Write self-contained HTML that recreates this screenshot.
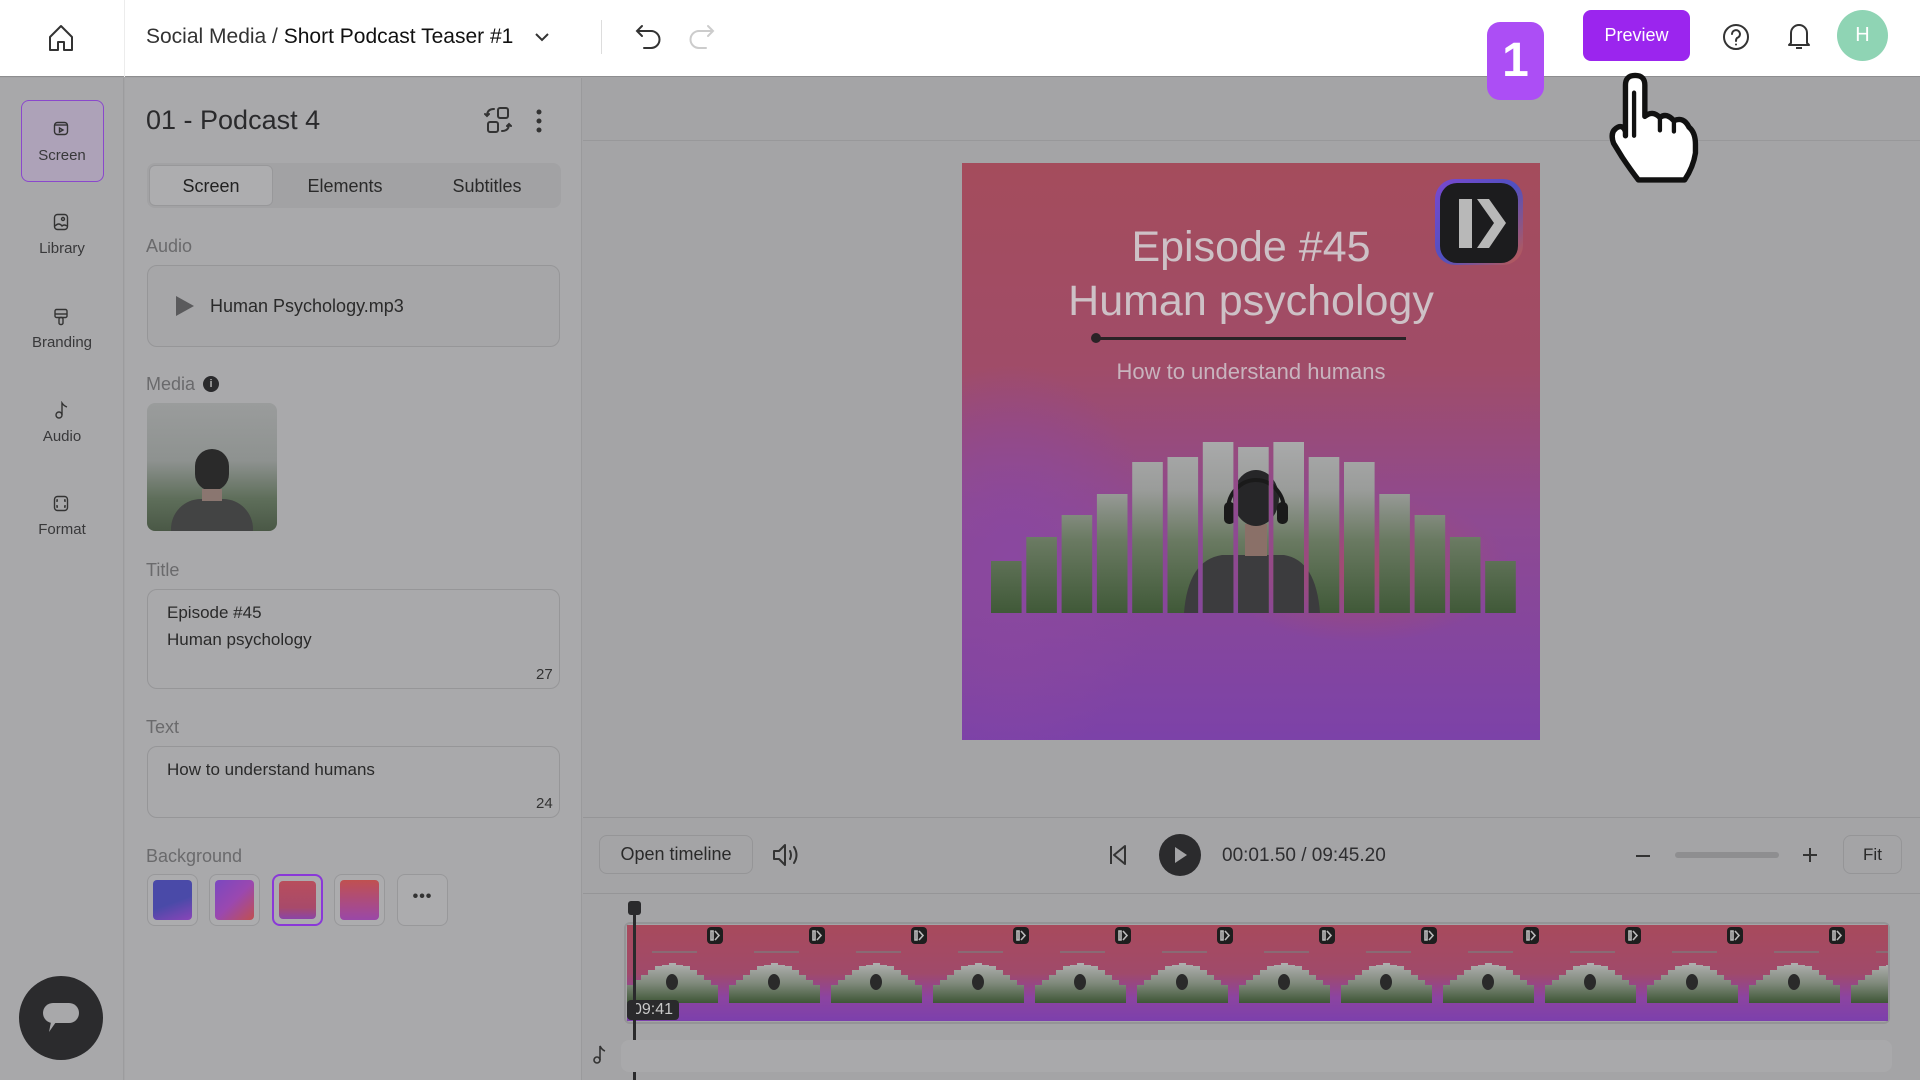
<!DOCTYPE html>
<html><head><meta charset="utf-8"><style>
*{box-sizing:border-box;margin:0;padding:0}
body{width:1920px;height:1080px;overflow:hidden;position:relative;background:#a4a4a6;font-family:"Liberation Sans",sans-serif;color:#2a2a2c}
.a{position:absolute}
.lbl{position:absolute;left:0;width:124px;text-align:center;font-size:15px;color:#38383a}
.sec{position:absolute;left:146px;font-size:18px;color:#6a6a6c}
.box{position:absolute;left:147px;width:413px;border:1.5px solid #969698;border-radius:10px;background:#a9a9ab}
.sw{position:absolute;top:874px;width:51px;height:52px;border:1.5px solid #98989a;border-radius:8px;background:#acacae;padding:5px}
.sw div{width:100%;height:100%;border-radius:4px}
</style></head><body>
<!-- header -->
<div class="a" style="left:0;top:0;width:1920px;height:77px;background:#fff;border-bottom:1px solid #8e8e90"></div>
<div class="a" style="left:124px;top:0;width:1px;height:77px;background:#ececec"></div>
<svg class="a" style="left:48px;top:24px" width="26" height="28" viewBox="0 0 26 28" fill="none" stroke="#333" stroke-width="2" stroke-linejoin="round"><path d="M2 13 L13 2 L24 13 V26 H16 V18 H10 V26 H2 Z"/></svg>
<div class="a" style="left:146px;top:25px;font-size:21px;color:#333;white-space:nowrap">Social Media / <span style="color:#111">Short Podcast Teaser #1</span></div>
<svg class="a" style="left:534px;top:31px" width="16" height="12" viewBox="0 0 16 12" fill="none" stroke="#333" stroke-width="2"><path d="M2 3 L8 9 L14 3"/></svg>
<div class="a" style="left:601px;top:20px;width:1px;height:34px;background:#ddd"></div>
<svg class="a" style="left:634px;top:23px" width="30" height="28" viewBox="0 0 30 28" fill="none" stroke="#333" stroke-width="2" stroke-linecap="round"><path d="M8 3 L3 8 L8 13 M3 8 H17 A8 8 0 0 1 17 25 H10"/></svg>
<svg class="a" style="left:686px;top:23px" width="30" height="28" viewBox="0 0 30 28" fill="none" stroke="#ccc" stroke-width="2" stroke-linecap="round"><path d="M22 3 L27 8 L22 13 M27 8 H13 A8 8 0 0 0 13 25 H20"/></svg>
<div class="a" style="left:1487px;top:22px;width:57px;height:78px;border-radius:13px;background:#ac4ef5;color:#fff;font-weight:bold;font-size:48px;text-align:center;line-height:78px">1</div>
<div class="a" style="left:1583px;top:10px;width:107px;height:51px;border-radius:8px;background:#9b25ee;color:#fff;font-size:18px;text-align:center;line-height:51px">Preview</div>
<svg class="a" style="left:1722px;top:23px" width="28" height="28" viewBox="0 0 28 28" fill="none" stroke="#333" stroke-width="2"><circle cx="14" cy="14" r="12"/><path d="M10 11 A4 4 0 1 1 15 15 Q14 16 14 18" stroke-linecap="round"/><circle cx="14" cy="21.5" r="1" fill="#333" stroke="none"/></svg>
<svg class="a" style="left:1786px;top:21px" width="26" height="30" viewBox="0 0 26 30" fill="none" stroke="#333" stroke-width="2" stroke-linejoin="round"><path d="M5 22 V12 A8 8 0 0 1 21 12 V22 L23 24 H3 Z M10 27 H16"/></svg>
<div class="a" style="left:1837px;top:10px;width:51px;height:51px;border-radius:50%;background:#8fd4b4;color:#fff;font-size:20px;text-align:center;line-height:51px">H</div>

<!-- left rail -->
<div class="a" style="left:0;top:78px;width:124px;height:1002px;background:#a8a8aa;border-right:1px solid #9c9c9e"></div>
<div class="a" style="left:21px;top:100px;width:83px;height:82px;border-radius:8px;background:#ada2b8;border:1.5px solid #8a48cc"></div>
<svg class="a" style="left:53px;top:120px" width="16" height="16" viewBox="0 0 16 16" fill="none" stroke="#333" stroke-width="1.4"><rect x="1.5" y="2.5" width="13" height="12" rx="3"/><path d="M2 5 H14"/><path d="M6.5 8 L10 10 L6.5 12 Z"/></svg>
<div class="lbl" style="top:147px">Screen</div>
<svg class="a" style="left:53px;top:213px" width="16" height="18" viewBox="0 0 16 18" fill="none" stroke="#333" stroke-width="1.4"><rect x="1.5" y="1.5" width="13" height="15" rx="3"/><circle cx="10" cy="6" r="1.5"/><path d="M2 13 Q6 9 9 13 Q11 11 14 13"/></svg>
<div class="lbl" style="top:240px">Library</div>
<svg class="a" style="left:53px;top:308px" width="16" height="18" viewBox="0 0 16 18" fill="none" stroke="#333" stroke-width="1.4"><rect x="2" y="1.5" width="12" height="8" rx="1.5"/><path d="M2 6 H14"/><rect x="6" y="9.5" width="4" height="7" rx="1.5"/></svg>
<div class="lbl" style="top:334px">Branding</div>
<svg class="a" style="left:53px;top:401px" width="16" height="18" viewBox="0 0 16 18" fill="none" stroke="#333" stroke-width="1.4"><circle cx="6" cy="14" r="3"/><path d="M9 14 V2 Q11 5 14 6"/></svg>
<div class="lbl" style="top:428px">Audio</div>
<svg class="a" style="left:53px;top:495px" width="16" height="17" viewBox="0 0 16 17" fill="none" stroke="#333" stroke-width="1.4"><rect x="1.5" y="1.5" width="13" height="14" rx="3"/><path d="M5 5 H4 V7 M11 5 H12 V7 M5 12 H4 V10 M11 12 H12 V10"/></svg>
<div class="lbl" style="top:521px">Format</div>
<div class="a" style="left:19px;top:976px;width:84px;height:84px;border-radius:50%;background:#2b2b2d"></div>
<svg class="a" style="left:41px;top:1000px" width="40" height="36" viewBox="0 0 40 36"><rect x="2" y="3" width="36" height="20" rx="10" fill="#a8a8aa"/><path d="M10 22 L8 32 L15 22 Z" fill="#a8a8aa"/></svg>

<!-- panel -->
<div class="a" style="left:125px;top:78px;width:457px;height:1002px;background:#a9a9ab;border-right:1px solid #9a9a9c"></div>
<div class="a" style="left:146px;top:105px;font-size:27px;font-weight:500;color:#2a2a2c">01 - Podcast 4</div>
<svg class="a" style="left:484px;top:106px" width="28" height="28" viewBox="0 0 28 28" fill="none" stroke="#333" stroke-width="2" stroke-linecap="round"><rect x="14" y="2" width="10" height="10" rx="2"/><rect x="4" y="16" width="10" height="10" rx="2"/><path d="M10 3 Q3 3 3 10 M1 8 L3 10 L5 8 M18 25 Q25 25 25 18 M23 20 L25 18 L27 20"/></svg>
<svg class="a" style="left:534px;top:108px" width="10" height="26" viewBox="0 0 10 26" fill="#333"><circle cx="5" cy="4" r="2.5"/><circle cx="5" cy="13" r="2.5"/><circle cx="5" cy="22" r="2.5"/></svg>
<div class="a" style="left:147px;top:163px;width:414px;height:45px;border-radius:8px;background:#a2a2a4"></div>
<div class="a" style="left:149px;top:165px;width:124px;height:41px;border-radius:6px;background:#adadaf;border:1px solid #98989a"></div>
<div class="a" style="left:149px;top:176px;width:124px;text-align:center;font-size:18px;color:#222">Screen</div>
<div class="a" style="left:283px;top:176px;width:124px;text-align:center;font-size:18px;color:#2a2a2a">Elements</div>
<div class="a" style="left:425px;top:176px;width:124px;text-align:center;font-size:18px;color:#2a2a2a">Subtitles</div>
<div class="sec" style="top:236px">Audio</div>
<div class="box" style="top:265px;height:82px;background:#a6a6a8"></div>
<svg class="a" style="left:174px;top:295px" width="22" height="22" viewBox="0 0 22 22"><path d="M2 1 L20 11 L2 21 Z" fill="#5a5a5c"/></svg>
<div class="a" style="left:210px;top:296px;font-size:18px;color:#2a2a2a">Human Psychology.mp3</div>
<div class="sec" style="top:374px">Media</div>
<div class="a" style="left:203px;top:376px;width:16px;height:16px;border-radius:50%;background:#2a2a2c;color:#aaa;font-size:11px;font-weight:bold;text-align:center;line-height:16px">i</div>
<div class="a" style="left:147px;top:403px;width:130px;height:128px;border-radius:8px;overflow:hidden;background:linear-gradient(#9a9c9c 0%,#8e9290 45%,#5e6e5a 75%,#4a5846 100%)">
<div class="a" style="left:48px;top:46px;width:34px;height:42px;border-radius:17px;background:#2a2a2a"></div>
<div class="a" style="left:24px;top:96px;width:82px;height:50px;border-radius:30px 30px 0 0;background:#434444"></div>
<div class="a" style="left:55px;top:86px;width:20px;height:12px;background:#8a7670"></div>
</div>
<div class="sec" style="top:560px">Title</div>
<div class="box" style="top:589px;height:100px"></div>
<div class="a" style="left:167px;top:599px;font-size:17px;line-height:27px;color:#2a2a2a">Episode #45<br>Human psychology</div>
<div class="a" style="left:536px;top:666px;font-size:15px;color:#333">27</div>
<div class="sec" style="top:717px">Text</div>
<div class="box" style="top:746px;height:72px"></div>
<div class="a" style="left:167px;top:760px;font-size:17px;color:#2a2a2a">How to understand humans</div>
<div class="a" style="left:536px;top:795px;font-size:15px;color:#333">24</div>
<div class="sec" style="top:846px">Background</div>
<div class="sw" style="left:147px"><div style="background:linear-gradient(160deg,#4a4aa8 55%,#8a45b8)"></div></div>
<div class="sw" style="left:209px"><div style="background:linear-gradient(135deg,#7a48c0,#9a48b0 50%,#c05050)"></div></div>
<div class="sw" style="left:272px;border:2.5px solid #8a38d8"><div style="background:linear-gradient(#b84e5c,#a84a6a 70%,#8a45a8)"></div></div>
<div class="sw" style="left:334px"><div style="background:linear-gradient(#c05050,#9a48a8)"></div></div>
<div class="sw" style="left:397px"></div>
<div class="a" style="left:397px;top:888px;width:51px;text-align:center;font-size:16px;font-weight:bold;color:#333;letter-spacing:1px">•••</div>

<!-- main -->
<div class="a" style="left:583px;top:140px;width:1337px;height:1px;background:#98989a"></div>
<div class="a" style="left:962px;top:163px;width:578px;height:577px;overflow:hidden;background:linear-gradient(180deg,#a44c5c 0%,#a04c68 35%,#8e4a92 62%,#7c42a8 100%)">
<div class="a" style="left:-100px;top:200px;width:300px;height:400px;background:radial-gradient(#8a48a0,rgba(138,72,160,0) 70%)"></div>
<div class="a" style="left:250px;top:330px;width:300px;height:150px;background:radial-gradient(rgba(170,76,100,.8),rgba(170,76,100,0) 70%)"></div>
</div>
<div class="a" style="left:962px;top:220px;width:578px;text-align:center;font-size:43px;line-height:54px;color:#cdc1c6">Episode #45<br>Human psychology</div>
<div class="a" style="left:1096px;top:337px;width:310px;height:3px;background:#2a2226"></div>
<div class="a" style="left:1091px;top:333px;width:10px;height:10px;border-radius:50%;background:#2a2226"></div>
<div class="a" style="left:962px;top:359px;width:578px;text-align:center;font-size:22px;color:#c8b4be">How to understand humans</div>
<div class="a" style="left:1435px;top:179px;width:88px;height:86px;border-radius:20px;background:linear-gradient(135deg,#7a48d0,#5050c0 50%,#c05a50)"></div>
<div class="a" style="left:1440px;top:183px;width:78px;height:80px;border-radius:17px;background:#1c1c1e"></div>
<svg class="a" style="left:1455px;top:197px" width="55" height="54" viewBox="0 0 55 54"><rect x="4" y="2" width="13" height="49" fill="#b8b8b8"/><path d="M22 2 H34 L51 26 L34 51 H22 L39 26 Z" fill="#b8b8b8"/></svg>
<svg class="a" style="left:962px;top:420px" width="578" height="200">
<defs><linearGradient id="bg" x1="0" y1="0" x2="0" y2="1"><stop offset="0" stop-color="#b0b0b2"/><stop offset=".35" stop-color="#9a9c9a"/><stop offset=".6" stop-color="#6a7a62"/><stop offset="1" stop-color="#3c5634"/></linearGradient>
<clipPath id="bars"><rect x="29" y="141" width="30.6" height="52"/><rect x="64.3" y="117" width="30.6" height="76"/><rect x="99.6" y="95" width="30.6" height="98"/><rect x="134.9" y="74" width="30.6" height="119"/><rect x="170.2" y="42" width="30.6" height="151"/><rect x="205.5" y="37" width="30.6" height="156"/><rect x="240.8" y="22" width="30.6" height="171"/><rect x="276.1" y="27" width="30.6" height="166"/><rect x="311.4" y="22" width="30.6" height="171"/><rect x="346.7" y="37" width="30.6" height="156"/><rect x="382" y="42" width="30.6" height="151"/><rect x="417.3" y="74" width="30.6" height="119"/><rect x="452.6" y="95" width="30.6" height="98"/><rect x="487.9" y="117" width="30.6" height="76"/><rect x="523.2" y="141" width="30.6" height="52"/></clipPath></defs>
<g clip-path="url(#bars)"><rect x="0" y="0" width="578" height="200" fill="url(#bg)"/>
<path d="M222 193 Q226 140 260 135 L322 135 Q354 140 358 193 Z" fill="#3c3c3e"/>
<rect x="283" y="104" width="22" height="32" fill="#8a7068"/>
<ellipse cx="294" cy="78" rx="23" ry="28" fill="#262628"/>
<path d="M266 90 A28 30 0 0 1 322 90" stroke="#1a1a1a" stroke-width="4" fill="none"/>
<rect x="262" y="82" width="11" height="22" rx="5" fill="#1a1a1a"/><rect x="315" y="82" width="11" height="22" rx="5" fill="#1a1a1a"/></g>
</svg>

<!-- hand cursor -->
<svg class="a" style="left:1577px;top:60px" width="140" height="130" viewBox="0 0 130 120"><path d="M45 70 L45 23 Q45 14 54 14 Q63 14 63 23 L63 52 Q70 46 77 53 Q83 48 90 56 Q99 52 104 62 Q110 67 110 78 L110 86 Q108 99 100 111 L57 111 Q50 102 42 90 L34 77 Q30 66 38 62 Q43 60 45 66 Z" fill="#fff" stroke="#111" stroke-width="5" stroke-linejoin="round"/><path d="M53 70 L53 30 M77 53 L77 65 M90 56 L90 66" stroke="#111" stroke-width="4" stroke-linecap="round"/></svg>

<!-- toolbar -->
<div class="a" style="left:583px;top:817px;width:1337px;height:1px;background:#959597"></div>
<div class="a" style="left:599px;top:835px;width:154px;height:39px;border:1.5px solid #959597;border-radius:8px;text-align:center;line-height:37px;font-size:18px;color:#2a2a2a">Open timeline</div>
<svg class="a" style="left:771px;top:842px" width="30" height="26" viewBox="0 0 30 26" fill="none" stroke="#333" stroke-width="2" stroke-linejoin="round"><path d="M3 9 H8 L14 3 V23 L8 17 H3 Z"/><path d="M19 9 Q21 13 19 17 M23 5 Q28 13 23 21" stroke-linecap="round"/></svg>
<svg class="a" style="left:1108px;top:843px" width="20" height="24" viewBox="0 0 20 24" fill="none" stroke="#333" stroke-width="2" stroke-linejoin="round"><path d="M3 3 V21 M17 3 L6 12 L17 21 Z"/></svg>
<div class="a" style="left:1159px;top:834px;width:42px;height:42px;border-radius:50%;background:#2b2b2d"></div>
<svg class="a" style="left:1172px;top:845px" width="18" height="20" viewBox="0 0 18 20"><path d="M3 2 L15 10 L3 18 Z" fill="#a4a4a6"/></svg>
<div class="a" style="left:1222px;top:845px;font-size:19px;color:#2e2e30">00:01.50 / 09:45.20</div>
<div class="a" style="left:1636px;top:855px;width:14px;height:2px;background:#333"></div>
<div class="a" style="left:1675px;top:852px;width:104px;height:6px;border-radius:3px;background:#8e8e90"></div>
<svg class="a" style="left:1802px;top:847px" width="16" height="16" viewBox="0 0 16 16" stroke="#333" stroke-width="2"><path d="M8 1 V15 M1 8 H15"/></svg>
<div class="a" style="left:1843px;top:835px;width:59px;height:39px;border:1.5px solid #959597;border-radius:8px;text-align:center;line-height:37px;font-size:17px;color:#2a2a2a">Fit</div>
<div class="a" style="left:583px;top:893px;width:1337px;height:1px;background:#959597"></div>

<!-- timeline -->
<div class="a" style="left:624px;top:922px;width:1266px;height:102px;border:2px solid #949496;border-radius:6px"></div>
<svg class="a" style="left:627px;top:925px" width="1261" height="96">
<defs><linearGradient id="fg" x1="0" y1="0" x2="0" y2="1"><stop offset="0" stop-color="#a84a5c"/><stop offset=".5" stop-color="#a04a6a"/><stop offset=".75" stop-color="#8c44a0"/><stop offset="1" stop-color="#7c40ac"/></linearGradient>
<linearGradient id="fb" x1="0" y1="0" x2="0" y2="1"><stop offset="0" stop-color="#b0b0b0"/><stop offset=".5" stop-color="#808a7c"/><stop offset="1" stop-color="#3e5636"/></linearGradient>
<pattern id="fr" x="0" y="0" width="102" height="96" patternUnits="userSpaceOnUse">
<rect width="102" height="96" fill="url(#fg)"/>
<rect x="25" y="26" width="45" height="2" fill="#8a6a74"/>
<path d="M0 78 V60 H7 V55 H14 V50 H21 V45 H28 V41 H35 V40 H42 V38 H49 V40 H56 V41 H63 V45 H70 V50 H77 V55 H84 V60 H91 V78 Z" fill="url(#fb)"/>
<ellipse cx="45" cy="57" rx="6" ry="8" fill="#2a2a2a"/>
<rect x="80" y="2" width="16" height="17" rx="4" fill="#1e1e1e"/><path d="M84 6 H86 V15 H84 Z M88 6 L92 10.5 L88 15" fill="none" stroke="#bbb" stroke-width="1.6"/>
</pattern></defs>
<rect width="1261" height="96" fill="url(#fr)"/>
</svg>
<div class="a" style="left:627px;top:1000px;width:52px;height:20px;border-radius:4px;background:#2a2a2c;color:#c8c8c8;font-size:16px;line-height:20px;text-align:center">09:41</div>
<div class="a" style="left:633px;top:908px;width:3px;height:172px;background:#2a2a2c"></div>
<div class="a" style="left:628px;top:901px;width:13px;height:14px;border-radius:3px;background:#2a2a2c"></div>
<div class="a" style="left:621px;top:1040px;width:1271px;height:32px;border-radius:8px;background:#a9a9ab"></div>
<svg class="a" style="left:592px;top:1043px" width="16" height="22" viewBox="0 0 16 22" fill="none" stroke="#333" stroke-width="1.6"><circle cx="5" cy="17" r="3"/><path d="M8 17 V3 Q10 7 13 8"/></svg>
</body></html>
